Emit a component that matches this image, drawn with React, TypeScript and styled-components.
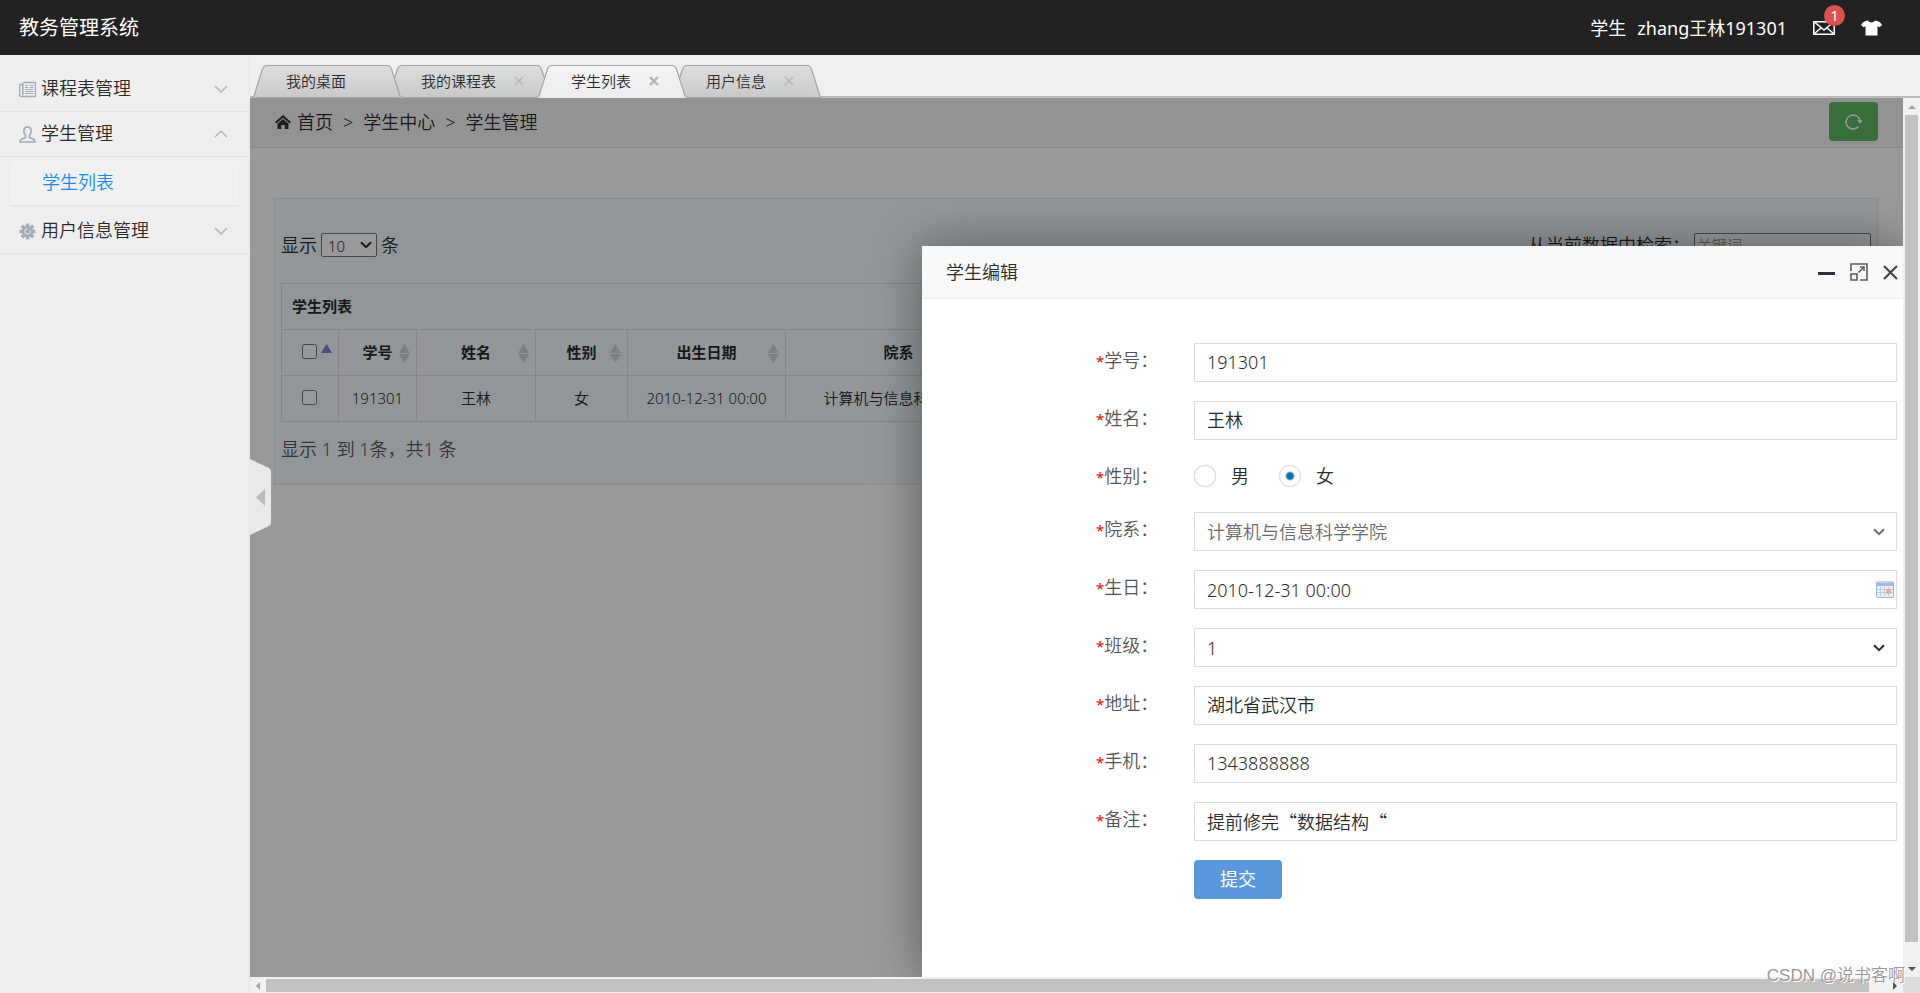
import React, { useState } from "react";
import styled, { createGlobalStyle, css } from "styled-components";

const GlobalStyle = createGlobalStyle`
  *, *::before, *::after { box-sizing: border-box; }
  html, body, #root { height: 100%; }
  body {
    margin: 0;
    overflow: hidden;
    color: #2b2b2b;
    font-family: "Noto Sans", "Noto Sans CJK SC", sans-serif;
    font-size: 18px;
    font-weight: 350;
    line-height: 24px;
  }
  button, input, select { font: inherit; color: inherit; }
  button { padding: 0; border: 0; background: none; cursor: pointer; }
  a { color: inherit; text-decoration: none; }
  ul { margin: 0; padding: 0; list-style: none; }
  svg { display: block; flex: none; }
`;

/* ---------- page shell ---------- */

const Page = styled.div`
  position: relative;
  display: flex;
  flex-direction: column;
  height: 100vh;
`;

const Header = styled.header`
  flex: none;
  display: flex;
  align-items: center;
  justify-content: space-between;
  height: 55px;
  padding: 0 38px 0 19px;
  background: #222;
  color: #fff;
  font-weight: 400;
`;

const Brand = styled.a`
  font-size: 20px;
`;

const UserArea = styled.div`
  display: flex;
  align-items: center;
`;

const UserName = styled.a`
  margin: 0 26px 0 11px;
`;

const MailLink = styled.a`
  position: relative;
  margin-right: 26px;
`;

const Badge = styled.span`
  position: absolute;
  top: -16px;
  left: 11px;
  width: 21px;
  height: 21px;
  border-radius: 50%;
  background: #dd514c;
  font-size: 15px;
  line-height: 20px;
  text-align: center;
`;

const Body = styled.div`
  flex: 1;
  display: flex;
  min-height: 0;
`;

/* ---------- sidebar ---------- */

const Sidebar = styled.nav`
  flex: none;
  width: 250px;
  padding-top: 12px;
  border-right: 1px solid #e5e5e5;
  background: #eee;
`;

const MenuHead = styled.button`
  display: flex;
  align-items: center;
  width: 100%;
  height: 45px;
  padding: 0 21px 0 19px;
  border-bottom: 1px solid #e2e2e2;
  text-align: left;
`;

const MenuLabel = styled.span`
  flex: 1;
  margin-left: 5px;
  padding-bottom: 2px;
`;

const SubMenu = styled.ul`
  padding: 4px 10px 3px;
`;

const SubLink = styled.a`
  display: flex;
  align-items: center;
  height: 45px;
  padding: 0 0 2px 32px;
  border-bottom: 1px solid #e2e2e2;
  background: #f1f1f1;
  color: #148cf1;
`;

/* ---------- tabs ---------- */

const Main = styled.main`
  position: relative;
  flex: 1;
  display: flex;
  flex-direction: column;
  min-width: 0;
`;

const TabBar = styled.div`
  flex: none;
  display: flex;
  align-items: flex-end;
  height: 43px;
  padding-left: 2px;
  background: linear-gradient(#efeef0 41px, #b3b3b3 41px, #c4c4c4 43px);
`;

const Tab = styled.div<{ $layer: number }>`
  position: relative;
  z-index: ${(p) => p.$layer};
  display: flex;
  height: 33px;
  & + & { margin-left: -15px; }
`;

const TabMid = styled.div<{ $active?: boolean }>`
  display: flex;
  align-items: center;
  gap: 18px;
  padding: 0 13px 2px 19px;
  border-top: 1px solid #a3a3a3;
  font-size: 15px;
  ${(p) =>
    p.$active
      ? css`background: linear-gradient(#f3f4f3, #ececee);`
      : css`
          border-bottom: 1px solid #a8a8a8;
          background: linear-gradient(#dcdedd, #c9c9cb);
        `}
`;

const TabClose = styled.button`
  width: 10px;
  height: 10px;
`;

const TabSpacer = styled.span`
  width: 10px;
`;

/* ---------- framed content with scroll bars ---------- */

const Frame = styled.div`
  flex: 1;
  display: grid;
  grid-template-columns: minmax(0, 1fr) 17px;
  grid-template-rows: minmax(0, 1fr) 16px;
  min-height: 0;
`;

const Viewport = styled.div`
  position: relative;
  overflow: hidden;
  background: #fff;
`;

const ScrollTrack = styled.div<{ $vertical?: boolean }>`
  display: flex;
  flex-direction: ${(p) => (p.$vertical ? "column" : "row")};
  padding: ${(p) => (p.$vertical ? "0 2px" : "2px 0 1px")};
  background: #f1f1f1;
`;

const ScrollArrow = styled.span<{ $vertical?: boolean }>`
  flex: none;
  display: flex;
  align-items: center;
  justify-content: center;
  ${(p) => (p.$vertical ? "height: 17px;" : "width: 16px;")}
`;

const ScrollThumb = styled.span<{ $vertical?: boolean }>`
  flex: 1;
  margin: ${(p) => (p.$vertical ? "0 0 18px" : "0 18px 0 0")};
  background: #c1c1c1;
`;

const ScrollCorner = styled.div`
  background: #dcdcdc;
`;

const Crumbs = styled.nav`
  display: flex;
  align-items: center;
  height: 50px;
  padding: 0 25px 2px;
  border-bottom: 1px solid #e5e5e5;
  background: #f5f5f5;
`;

const CrumbLink = styled.a`
  display: flex;
  align-items: center;
  gap: 6px;
`;

const CrumbSep = styled.span`
  margin: 0 10px;
`;

const Refresh = styled.button`
  display: flex;
  align-items: center;
  justify-content: center;
  width: 49px;
  height: 39px;
  margin: 0 0 4px auto;
  align-self: flex-end;
  border-radius: 4px;
  background: #5eb95e;
  color: #fff;
`;

const Panel = styled.section`
  height: 287px;
  margin: 50px 25px 0 24px;
  padding: 34px 6px 0;
  border: 1px solid #e8e8e8;
  background: #f3fafe;
`;

const Toolbar = styled.div`
  display: flex;
  align-items: center;
  justify-content: space-between;
  height: 24px;
  margin-bottom: 26px;
`;

const ToolLabel = styled.label`
  display: flex;
  align-items: center;
  gap: 4px;
`;

const SelectBox = styled.span<{ $inset: number }>`
  position: relative;
  display: flex;
  align-items: center;
  & > svg {
    position: absolute;
    right: ${(p) => p.$inset}px;
    pointer-events: none;
  }
`;

const PageSize = styled.select`
  appearance: none;
  width: 56px;
  height: 24px;
  padding: 0 6px;
  border: 1px solid #767676;
  border-radius: 2px;
  background: #fff;
  font-size: 15px;
`;

const Search = styled.input`
  width: 177px;
  height: 24px;
  padding: 0 2px;
  border: 1px solid #767676;
  border-radius: 2px;
  font-size: 15px;
  &::placeholder { color: #999; }
`;

const Table = styled.table`
  border-collapse: collapse;
  table-layout: fixed;
  width: 730px;
  font-size: 15px;
  text-align: center;
`;

const Cell = styled.td`
  height: 46px;
  padding: 0 0 2px;
  border: 1px solid #ddd;
`;

const HeadCell = styled(Cell).attrs({ as: "th" })`
  position: relative;
`;

const TitleCell = styled(Cell).attrs({ as: "th" })`
  padding-left: 10px;
  text-align: left;
`;

const SortMark = styled.svg`
  position: absolute;
  right: 6px;
  top: 14px;
`;

const RowCheck = styled.input`
  display: inline-block;
  width: 15px;
  height: 15px;
  margin: 0 2px 0 0;
  vertical-align: -1px;
`;

const Summary = styled.p`
  margin: 15px 0 0;
  color: #555;
`;

const Shade = styled.div`
  position: absolute;
  inset: 0;
  background: rgba(0, 0, 0, 0.4);
`;

/* ---------- dialog ---------- */

const Dialog = styled.section`
  position: absolute;
  top: 148px;
  right: 0;
  bottom: 0;
  left: 672px;
  display: flex;
  flex-direction: column;
  border-radius: 2px 0 0 0;
  background: #fff;
  box-shadow: 1px 1px 50px rgba(0, 0, 0, 0.4);
`;

const DialogHead = styled.header`
  flex: none;
  display: flex;
  align-items: center;
  justify-content: space-between;
  height: 53px;
  padding: 0 5px 0 24px;
  border-bottom: 1px solid #eee;
  background: #f8f8f8;
`;

const DialogTitle = styled.h2`
  margin: 0;
  font-size: 18px;
  font-weight: inherit;
`;

const DialogTools = styled.div`
  display: flex;
  align-items: center;
  gap: 15px;
`;

const Form = styled.form`
  display: flex;
  flex-direction: column;
  gap: 19px;
  padding: 44px 6px 0 174px;
`;

const Row = styled.div<{ $short?: boolean }>`
  display: flex;
  height: ${(p) => (p.$short ? 34 : 39)}px;
`;

const FieldLabel = styled.label`
  flex: none;
  width: 98px;
  color: #555;
  line-height: 35px;
`;

const Star = styled.span`
  color: red;
  font-size: 15px;
  font-weight: 400;
`;

const fieldBox = css`
  flex: 1;
  min-width: 0;
  border: 1px solid #ddd;
  border-radius: 0;
  background: #fff;
`;

const TextField = styled.input<{ $wideMarks?: boolean }>`
  ${fieldBox}
  padding: 0 12px 2px;
  ${(p) => p.$wideMarks && css`font-family: "Noto Sans CJK SC", sans-serif;`}
`;

const FieldSelectBox = styled(SelectBox)<{ $muted?: boolean }>`
  flex: 1;
  color: ${(p) => (p.$muted ? "#6b6b6b" : "#2b2b2b")};
`;

const SelectField = styled.select`
  ${fieldBox}
  appearance: none;
  height: 100%;
  padding: 0 12px;
`;

const DateBox = styled.div`
  ${fieldBox}
  display: flex;
  align-items: center;
  padding-right: 2px;
`;

const DateInput = styled.input`
  flex: 1;
  height: 100%;
  padding: 0 12px;
  border: 0;
  background: none;
`;

const RadioLabel = styled.label`
  display: flex;
  align-items: center;
  gap: 15px;
  margin-right: 30px;
`;

const Radio = styled.input`
  appearance: none;
  width: 22px;
  height: 22px;
  margin: 0;
  border: 1px solid #ddd;
  border-radius: 50%;
  background: #fff;
  box-shadow: 0 0 1px #ccc;
  &:checked {
    background: radial-gradient(circle, #0f73ab 3px, #fff 5px);
  }
`;

const Submit = styled.button`
  width: 88px;
  margin-left: 98px;
  padding-bottom: 2px;
  border-radius: 4px;
  background: #5a98de;
  color: #fff;
  font-weight: 400;
`;

const Handle = styled.button`
  position: absolute;
  top: 404px;
  left: 0;
`;

const Watermark = styled.span`
  position: absolute;
  right: 15px;
  bottom: 5px;
  color: #999;
  font-family: "Liberation Sans", "Noto Sans CJK SC", sans-serif;
  font-size: 17px;
  text-shadow: 1px 1px 0 #fff;
`;

/* ---------- icons ---------- */

const NewsIcon = () => (
  <svg width="17" height="17" viewBox="0 0 17 17" fill="none" stroke="#a3abba">
    <path d="M4.500 1.500h11a1 1 0 0 1 1 1v12a1 1 0 0 1-1 1h-13a1.800 1.800 0 0 1-2-2v-10h3" strokeWidth="1.600" />
    <path d="M3.800 1.500v12.500" strokeWidth="1.600" />
    <path d="M6 4.500h3M6 6.500h3M10.500 4.500h4M10.500 6.500h4M6 8.500h8.500M6 10.500h8.500M6 12.500h8.500" />
  </svg>
);

const PersonIcon = () => (
  <svg width="17" height="17" viewBox="0 0 17 17" fill="none" stroke="#a3abba" strokeWidth="1.700">
    <path d="M8.500 1C6 1 4.800 2.600 4.900 5c.1 2 .8 3.700 1.700 4.600v1.200c0 .7-.6 1.100-1.400 1.300-2.500.7-4.200 1-4.300 3.900h15.200c-.1-2.900-1.800-3.200-4.300-3.900-.8-.2-1.400-.6-1.400-1.300V9.600c.9-.9 1.600-2.600 1.700-4.600C12.200 2.600 11 1 8.500 1z" />
  </svg>
);

const GearIcon = () => (
  <svg width="17" height="17" viewBox="0 0 17 17">
    <g stroke="#a3abba" strokeWidth="3.400">
      <path d="M8.500 .5v16M.5 8.500h16M2.800 2.800l11.400 11.400M14.200 2.800L2.800 14.200" />
    </g>
    <circle cx="8.500" cy="8.500" r="5.600" fill="#a3abba" />
    <path d="M10.800 7.500A2.600 2.600 0 1 1 8.500 5.900" fill="none" stroke="#eee" />
  </svg>
);

const Chevron = ({ up }: { up?: boolean }) => (
  <svg width="14" height="8" viewBox="0 0 14 8" fill="none" stroke="#b5b5b5" strokeWidth="1.500">
    <path d={up ? "M1 7l6-6 6 6" : "M1 1l6 6 6-6"} />
  </svg>
);

const MailIcon = () => (
  <svg width="22" height="14" viewBox="0 0 22 14" fill="none" stroke="#fff" strokeWidth="1.500">
    <path d="M.8.800h20.400v12.400H.8z" />
    <path d="M2 1.500l9 7.500 9-7.500M1.500 12.500L8 7M20.500 12.500L14 7" />
  </svg>
);

const ShirtIcon = () => (
  <svg width="21" height="16" viewBox="0 0 21 16" fill="#fff">
    <path d="M7 .5c.8 1.300 2 2 3.500 2S13.200 1.800 14 .5c3 .3 5.500 1.500 7 4.500l-2.500 2.300-2-1V15.500h-12V6.300l-2 1L0 5C1.500 2 4 .8 7 .5z" />
  </svg>
);

const HomeIcon = () => (
  <svg width="16" height="14" viewBox="0 0 16 14" fill="#333">
    <path d="M8 0l8 7-1.300 1.500L8 2.700 1.300 8.500 0 7z" />
    <path d="M8 4l5.500 4.700V14H9.700v-4H6.300v4H2.500V8.700z" />
  </svg>
);

const RefreshIcon = () => (
  <svg width="18" height="17" viewBox="0 0 18 17" fill="none" stroke="currentColor" strokeWidth="1.500">
    <path d="M13.500 13.500A7 7 0 1 1 15 8" />
    <path d="M12 7.200h6l-3 3.400z" fill="currentColor" stroke="none" />
  </svg>
);

const SelectArrow = () => (
  <svg width="12" height="8" viewBox="0 0 12 8" fill="none" stroke="currentColor" strokeWidth="2">
    <path d="M1 1.200l5 5 5-5" />
  </svg>
);

const CloseMark = ({ active }: { active?: boolean }) => (
  <svg width="10" height="10" viewBox="0 0 10 10" stroke={active ? "#b0b5ba" : "#b4b8bc"} strokeWidth={active ? 2.4 : 1.6}>
    <path d="M1 1l8 8M9 1L1 9" />
  </svg>
);

const TabEdge = ({ active, side }: { active?: boolean; side: "left" | "right" }) => {
  const id = `edge-${side}-${active ? "on" : "off"}`;
  const left = side === "left";
  const line = left ? "M0 32.500L2 31 10.500 4Q12 .5 15 .5" : "M0 .5Q3 .5 4.500 4L13 31 15 32.500";
  return (
    <svg width="15" height="33" viewBox="0 0 15 33">
      <defs>
        <linearGradient id={id} x1="0" y1="0" x2="0" y2="1">
          <stop offset="0" stopColor={active ? "#f3f4f3" : "#dcdedd"} />
          <stop offset="1" stopColor={active ? "#ececee" : "#c9c9cb"} />
        </linearGradient>
      </defs>
      <path d={line + (left ? "V33H0z" : "V33H0z")} fill={`url(#${id})`} />
      <path d={line} fill="none" stroke="#a3a3a3" strokeWidth="1.200" />
      {!active && <path d={left ? "M2 32.500H15" : "M0 32.500H13"} stroke="#a8a8a8" />}
    </svg>
  );
};

const SortIcon = ({ asc }: { asc?: boolean }) => (
  <SortMark width="11" height="19" viewBox="0 0 11 19">
    <path d="M0 9L5.500 0 11 9z" fill={asc ? "#7d7de0" : "#d4d4d4"} />
    {!asc && <path d="M0 10L5.500 19 11 10z" fill="#d4d4d4" />}
  </SortMark>
);

const MaximizeIcon = () => (
  <svg width="18" height="18" viewBox="0 0 18 18" fill="none" stroke="#5c5b68" strokeWidth="1.600">
    <path d="M1 8V1h16v16h-7" />
    <path d="M1 11h6v6H1z" />
    <path d="M8.500 9.500L14 4M10 4h4v4" />
  </svg>
);

const CalendarIcon = () => (
  <svg width="18" height="17" viewBox="0 0 18 17">
    <rect x=".5" y="1" width="17" height="15.500" rx="1" fill="#e8f0fb" stroke="#9fb4d6" />
    <rect x="1" y="0" width="16" height="2" fill="#cfcfcb" />
    <rect x="1" y="2" width="16" height="3" fill="#9dbaf2" />
    <path d="M1 8.500h16M1 11.500h16M4.500 6v9M8.500 6v9M12.500 6v9" stroke="#bccde8" />
    <rect x="10" y="8" width="5" height="5" fill="#f0aa98" />
  </svg>
);

const Triangle = ({ d, dark }: { d: string; dark?: boolean }) => (
  <svg width="8" height="8" viewBox="0 0 8 8" fill={dark ? "#505050" : "#a3a3a3"}>
    <path d={d} />
  </svg>
);

/* ---------- data ---------- */

const tabs = [
  { name: "我的桌面", fixed: true },
  { name: "我的课程表" },
  { name: "学生列表", active: true },
  { name: "用户信息" },
];

const columns = ["学号", "姓名", "性别", "出生日期", "院系"];
const widths = [57, 78, 119, 92, 158, 226];
const student = ["191301", "王林", "女", "2010-12-31 00:00", "计算机与信息科学学院"];

const Label = ({ htmlFor, children }: { htmlFor?: string; children: React.ReactNode }) => (
  <FieldLabel htmlFor={htmlFor}>
    <Star>*</Star>
    {children}：
  </FieldLabel>
);

type TextRowProps = { id: string; label: string; value: string; wideMarks?: boolean };

const TextRow = ({ id, label, value, wideMarks }: TextRowProps) => (
  <Row>
    <Label htmlFor={id}>{label}</Label>
    <TextField id={id} defaultValue={value} $wideMarks={wideMarks} />
  </Row>
);

type SelectRowProps = { id: string; label: string; value: string; muted?: boolean };

const SelectRow = ({ id, label, value, muted }: SelectRowProps) => (
  <Row>
    <Label htmlFor={id}>{label}</Label>
    <FieldSelectBox $inset={12} $muted={muted}>
      <SelectField id={id}>
        <option>{value}</option>
      </SelectField>
      <SelectArrow />
    </FieldSelectBox>
  </Row>
);

const StudentForm = () => {
  const [gender, setGender] = useState("女");
  return (
    <Form onSubmit={(e) => e.preventDefault()}>
      <TextRow id="no" label="学号" value="191301" />
      <TextRow id="name" label="姓名" value="王林" />
      <Row $short role="radiogroup">
        <Label>性别</Label>
        {["男", "女"].map((g) => (
          <RadioLabel key={g}>
            <Radio type="radio" name="gender" checked={gender === g} onChange={() => setGender(g)} />
            {g}
          </RadioLabel>
        ))}
      </Row>
      <SelectRow id="dept" label="院系" value="计算机与信息科学学院" muted />
      <Row>
        <Label htmlFor="birth">生日</Label>
        <DateBox>
          <DateInput id="birth" defaultValue="2010-12-31 00:00" />
          <CalendarIcon />
        </DateBox>
      </Row>
      <SelectRow id="class" label="班级" value="1" />
      <TextRow id="address" label="地址" value="湖北省武汉市" />
      <TextRow id="phone" label="手机" value="1343888888" />
      <TextRow id="note" label="备注" value="提前修完“数据结构“" wideMarks />
      <Row>
        <Submit type="submit">提交</Submit>
      </Row>
    </Form>
  );
};

const StudentTable = () => (
  <Table>
    <colgroup>
      {widths.map((w, i) => (
        <col key={i} width={w} />
      ))}
    </colgroup>
    <thead>
      <tr>
        <TitleCell colSpan={6}>学生列表</TitleCell>
      </tr>
      <tr>
        <HeadCell>
          <RowCheck type="checkbox" />
          <SortIcon asc />
        </HeadCell>
        {columns.map((c) => (
          <HeadCell key={c}>
            {c}
            <SortIcon />
          </HeadCell>
        ))}
      </tr>
    </thead>
    <tbody>
      <tr>
        <Cell>
          <RowCheck type="checkbox" />
        </Cell>
        {student.map((v) => (
          <Cell key={v}>{v}</Cell>
        ))}
      </tr>
    </tbody>
  </Table>
);

export default function App() {
  return (
    <Page>
      <GlobalStyle />
      <Header>
        <Brand href="#">教务管理系统</Brand>
        <UserArea>
          <span>学生</span>
          <UserName href="#">zhang王林191301</UserName>
          <MailLink href="#">
            <MailIcon />
            <Badge>1</Badge>
          </MailLink>
          <a href="#">
            <ShirtIcon />
          </a>
        </UserArea>
      </Header>
      <Body>
        <Sidebar>
          <MenuHead>
            <NewsIcon />
            <MenuLabel>课程表管理</MenuLabel>
            <Chevron />
          </MenuHead>
          <MenuHead>
            <PersonIcon />
            <MenuLabel>学生管理</MenuLabel>
            <Chevron up />
          </MenuHead>
          <SubMenu>
            <li>
              <SubLink href="#">学生列表</SubLink>
            </li>
          </SubMenu>
          <MenuHead>
            <GearIcon />
            <MenuLabel>用户信息管理</MenuLabel>
            <Chevron />
          </MenuHead>
        </Sidebar>
        <Main>
          <TabBar>
            {tabs.map((t, i) => (
              <Tab key={t.name} $layer={t.active ? tabs.length + 1 : tabs.length - i}>
                <TabEdge side="left" active={t.active} />
                <TabMid $active={t.active}>
                  <span>{t.name}</span>
                  {t.fixed ? (
                    <TabSpacer />
                  ) : (
                    <TabClose>
                      <CloseMark active={t.active} />
                    </TabClose>
                  )}
                </TabMid>
                <TabEdge side="right" active={t.active} />
              </Tab>
            ))}
          </TabBar>
          <Frame>
            <Viewport>
              <Crumbs>
                <CrumbLink href="#">
                  <HomeIcon />
                  首页
                </CrumbLink>
                <CrumbSep>&gt;</CrumbSep>
                <span>学生中心</span>
                <CrumbSep>&gt;</CrumbSep>
                <span>学生管理</span>
                <Refresh>
                  <RefreshIcon />
                </Refresh>
              </Crumbs>
              <Panel>
                <Toolbar>
                  <ToolLabel>
                    显示
                    <SelectBox $inset={5}>
                      <PageSize>
                        <option>10</option>
                      </PageSize>
                      <SelectArrow />
                    </SelectBox>
                    条
                  </ToolLabel>
                  <ToolLabel>
                    从当前数据中检索：
                    <Search placeholder="关键词" />
                  </ToolLabel>
                </Toolbar>
                <StudentTable />
                <Summary>显示 1 到 1条，共1 条</Summary>
              </Panel>
              <Shade />
              <Dialog role="dialog">
                <DialogHead>
                  <DialogTitle>学生编辑</DialogTitle>
                  <DialogTools>
                    <button>
                      <svg width="17" height="18" viewBox="0 0 17 18" fill="#2e2d3c">
                        <path d="M0 9h17v3H0z" />
                      </svg>
                    </button>
                    <button>
                      <MaximizeIcon />
                    </button>
                    <button>
                      <svg width="15" height="15" viewBox="0 0 15 15" stroke="#3f3e4c" strokeWidth="2">
                        <path d="M1 1l13 13M14 1L1 14" />
                      </svg>
                    </button>
                  </DialogTools>
                </DialogHead>
                <StudentForm />
              </Dialog>
            </Viewport>
            <ScrollTrack $vertical>
              <ScrollArrow $vertical>
                <Triangle d="M0 6l4-4 4 4z" />
              </ScrollArrow>
              <ScrollThumb $vertical />
              <ScrollArrow $vertical>
                <Triangle dark d="M0 2l4 4 4-4z" />
              </ScrollArrow>
            </ScrollTrack>
            <ScrollTrack>
              <ScrollArrow>
                <Triangle d="M6 0L2 4l4 4z" />
              </ScrollArrow>
              <ScrollThumb />
              <ScrollArrow>
                <Triangle dark d="M2 0l4 4-4 4z" />
              </ScrollArrow>
            </ScrollTrack>
            <ScrollCorner />
          </Frame>
          <Handle>
            <svg width="21" height="76" viewBox="0 0 21 76">
              <path d="M0 0l18 8.500q3 1.500 3 4.500v50q0 3-3 4.500L0 76z" fill="#e9e9e9" />
              <path d="M15 30v17L6 38.500z" fill="#bbb" />
            </svg>
          </Handle>
        </Main>
      </Body>
      <Watermark>CSDN @说书客啊</Watermark>
    </Page>
  );
}
